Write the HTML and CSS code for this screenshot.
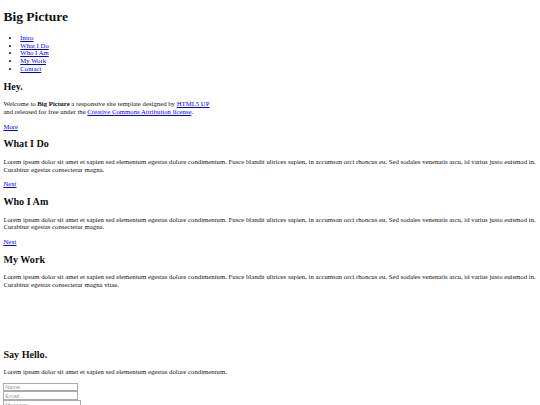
FILE: index.html
```html
<!DOCTYPE html>
<html lang="en">
<head>
<meta charset="utf-8">
<title>Big Picture</title>
<link rel="stylesheet" href="styles.css">
</head>
<body>
<header class="site-header">
  <h1>Big Picture</h1>
  <nav>
    <ul class="nav-list">
      <li><a href="#intro">Intro</a></li>
      <li><a href="#one">What I Do</a></li>
      <li><a href="#two">Who I Am</a></li>
      <li><a href="#work">My Work</a></li>
      <li><a href="#contact">Contact</a></li>
    </ul>
  </nav>
</header>

<section id="intro">
  <header><h2>Hey.</h2></header>
  <p>Welcome to <strong>Big Picture</strong> a responsive site template designed by <a href="#">HTML5 UP</a><br>
  and released for free under the <a href="#">Creative Commons Attribution license</a>.</p>
  <footer><a href="#one">More</a></footer>
</section>

<section id="one">
  <header><h2>What I Do</h2></header>
  <p>Lorem ipsum dolor sit amet et sapien sed elementum egestas dolore condimentum. Fusce blandit ultrices sapien, in accumsan orci rhoncus eu. Sed sodales venenatis arcu, id varius justo euismod in. Curabitur egestas consectetur magna.</p>
  <footer><a href="#two">Next</a></footer>
</section>

<section id="two">
  <header><h2>Who I Am</h2></header>
  <p>Lorem ipsum dolor sit amet et sapien sed elementum egestas dolore condimentum. Fusce blandit ultrices sapien, in accumsan orci rhoncus eu. Sed sodales venenatis arcu, id varius justo euismod in. Curabitur egestas consectetur magna.</p>
  <footer><a href="#work">Next</a></footer>
</section>

<section id="work">
  <header><h2>My Work</h2></header>
  <p>Lorem ipsum dolor sit amet et sapien sed elementum egestas dolore condimentum. Fusce blandit ultrices sapien, in accumsan orci rhoncus eu. Sed sodales venenatis arcu, id varius justo euismod in. Curabitur egestas consectetur magna vitae.</p>
  <div class="gallery"></div>
</section>

<section id="contact">
  <header><h2>Say Hello.</h2></header>
  <p>Lorem ipsum dolor sit amet et sapien sed elementum egestas dolore condimentum.</p>
  <form class="contact-form">
    <div class="field"><input class="text-input" type="text" name="name" placeholder="Name"></div>
    <div class="field"><input class="text-input" type="email" name="email" placeholder="Email"></div>
    <div class="field"><textarea class="text-area" name="message" placeholder="Message" rows="4"></textarea></div>
  </form>
</section>
</body>
</html>
```

FILE: styles.css
```css
html {
  background: #fff;
}

body {
  margin: 3.375px;
  font-family: "Liberation Serif", "Times New Roman", serif;
  font-size: 6.75px;
  line-height: 1.15;
  color: #111;
}

a {
  color: #0000ee;
}

h1 {
  font-size: 13.5px;
  margin: 6px 0 9.05px;
}

h2 {
  font-size: 10.125px;
  margin: 8px 0;
}

p {
  margin: 6.75px 0;
}

.nav-list {
  margin: 6.75px 0;
  padding-left: 16.9px;
}

.gallery {
  height: 45px;
}

.contact-form {
  margin: 0;
}

.text-input,
.text-area {
  display: block;
  box-sizing: border-box;
  margin: 0;
  padding: 0.4px 0.9px;
  border: 1px solid #ababab;
  border-radius: 0;
  font-family: "Liberation Sans", Arial, sans-serif;
  font-size: 5.6px;
  line-height: 1.15;
  background: #fff;
}

.text-input {
  width: 74.5px;
  height: 8.8px;
}

.text-area {
  width: 77.5px;
  height: 30px;
  resize: none;
}

.text-input::placeholder,
.text-area::placeholder {
  color: #9a9a9a;
}
```
